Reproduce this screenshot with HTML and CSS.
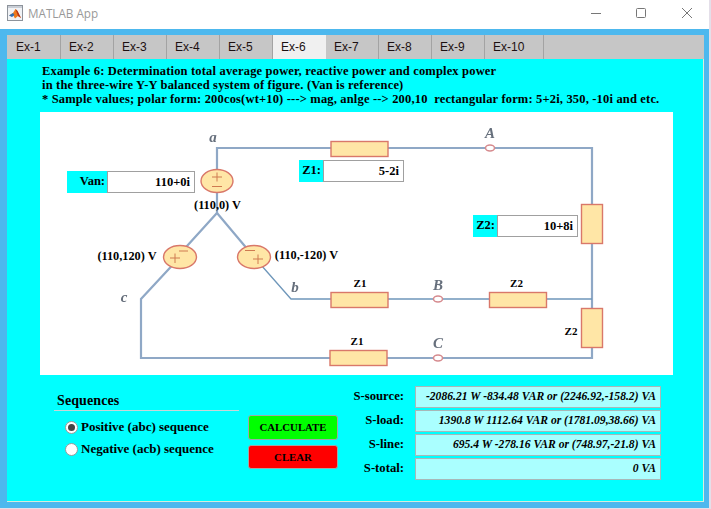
FILE: index.html
```html
<!DOCTYPE html>
<html lang="en">

<head>
    <meta charset="UTF-8">
    <title>MATLAB App</title>
    <link rel="stylesheet" href="styles.css">
</head>

<body>
    <div class="window">
        <header class="titlebar">
            <svg class="app-icon" width="16" height="16" viewBox="0 0 16 16">
                <rect x="0.5" y="0.5" width="15" height="15" fill="#f1f3f6" stroke="#8d939b" />
                <rect x="1" y="1" width="14" height="2" fill="#c9ced6" />
                <path d="M2 10.500 L6 8 L8.500 4 L10.500 6 L14 13 L11 11 L8 13.500 L6 10 Z" fill="#ee7a1c" />
                <path d="M2 10.500 L6 8 L7.500 10 L5 12 Z" fill="#2f6fb5" />
                <path d="M8.500 4 L10.500 6 L14 13 L11 11 Z" fill="#b9321a" />
            </svg>
            <span class="app-title">MATLAB App</span>
            <div class="controls">
                <svg class="control-min" width="10" height="10" viewBox="0 0 10 10">
                    <path d="M0 5.500 H10" stroke="#777" fill="none" />
                </svg>
                <svg width="10" height="10" viewBox="0 0 10 10">
                    <rect x="0.500" y="0.500" width="9" height="9" rx="1" stroke="#777" fill="none" />
                </svg>
                <svg width="10" height="10" viewBox="0 0 10 10">
                    <path d="M0 0 L10 10 M10 0 L0 10" stroke="#777" fill="none" />
                </svg>
            </div>
        </header>

        <div class="frame">
            <nav class="tabs">
                <div class="tab first">Ex-1</div>
                <div class="tab">Ex-2</div>
                <div class="tab">Ex-3</div>
                <div class="tab">Ex-4</div>
                <div class="tab">Ex-5</div>
                <div class="tab active">Ex-6</div>
                <div class="tab">Ex-7</div>
                <div class="tab">Ex-8</div>
                <div class="tab">Ex-9</div>
                <div class="tab wide">Ex-10</div>
            </nav>

            <main class="panel">
                <p class="intro">Example 6: Determination total average power, reactive power and complex power<br>
                    in the three-wire Y-Y balanced system of figure. (Van is reference)<br>
                    * Sample values; polar form: 200cos(wt+10) ---&gt; mag, anlge --&gt; 200,10&nbsp; rectangular form: 5+2i, 350, -10i and etc.</p>

                <div class="figure">
                    <svg class="circuit" width="633" height="263" viewBox="40 112 633 263">
                        <g class="wires">
                            <path d="M177 257 L217 213 L254 257" />
                            <path d="M217 214 V148 H592 V358 H141 V299 L180 257" />
                            <path class="thin" d="M254 257 L291 299 H592" />
                        </g>
                        <g class="parts">
                            <ellipse cx="217" cy="181" rx="16" ry="11.500" />
                            <ellipse cx="180" cy="257" rx="16.500" ry="11.500" />
                            <ellipse cx="254" cy="257" rx="16.500" ry="11.500" />
                            <rect x="331" y="141.500" width="57" height="15" />
                            <rect x="331" y="292.500" width="57" height="15" />
                            <rect x="489.500" y="292.500" width="57" height="15" />
                            <rect x="330" y="350.500" width="57" height="15" />
                            <rect x="581.500" y="204.500" width="21" height="39" />
                            <rect x="581.500" y="308.500" width="21" height="39" />
                        </g>
                        <g class="nodes">
                            <ellipse cx="490" cy="148" rx="4.500" ry="3" />
                            <ellipse cx="438" cy="299" rx="4.500" ry="3" />
                            <ellipse cx="438" cy="358" rx="4.500" ry="3" />
                        </g>
                        <g class="signs">
                            <path d="M212 177 H222 M217 172.500 V181.500 M212 186.500 H222" />
                            <path d="M170 258 H180 M175 253.500 V263 M179 251 H188" />
                            <path d="M245 250.500 H255 M253 259 H263 M258 254.500 V264" />
                        </g>
                        <g class="node-names">
                            <text x="213" y="142" text-anchor="middle">a</text>
                            <text x="490" y="138" text-anchor="middle">A</text>
                            <text x="295" y="292" text-anchor="middle">b</text>
                            <text x="124" y="302" text-anchor="middle">c</text>
                            <text x="438" y="290" text-anchor="middle">B</text>
                            <text x="438" y="348" text-anchor="middle">C</text>
                        </g>
                        <g class="part-names">
                            <text x="360" y="287" text-anchor="middle">Z1</text>
                            <text x="516.500" y="287" text-anchor="middle">Z2</text>
                            <text x="357" y="345" text-anchor="middle">Z1</text>
                            <text x="571" y="335" text-anchor="middle">Z2</text>
                        </g>
                        <g class="volt-names">
                            <text x="217.500" y="209" text-anchor="middle">(110,0) V</text>
                            <text x="127" y="260" text-anchor="middle">(110,120) V</text>
                            <text x="306.500" y="259" text-anchor="middle">(110,-120) V</text>
                        </g>
                    </svg>

                    <div class="field field-van">
                        <label class="field-label">Van:</label>
                        <div class="field-input">110+0i</div>
                    </div>
                    <div class="field field-z1">
                        <label class="field-label">Z1:</label>
                        <div class="field-input">5-2i</div>
                    </div>
                    <div class="field field-z2">
                        <label class="field-label">Z2:</label>
                        <div class="field-input">10+8i</div>
                    </div>
                </div>

                <div class="bottom">
                    <section class="sequences">
                        <h2>Sequences</h2>
                        <div class="radio-row"><span class="radio checked"></span>Positive (abc) sequence</div>
                        <div class="radio-row"><span class="radio"></span>Negative (acb) sequence</div>
                    </section>

                    <div class="buttons">
                        <button class="btn btn-calc">CALCULATE</button>
                        <button class="btn btn-clear">CLEAR</button>
                    </div>

                    <section class="results">
                        <div class="result-row">
                            <span class="result-label">S-source:</span>
                            <span class="result-value">-2086.21 W -834.48 VAR or (2246.92,-158.2) VA</span>
                        </div>
                        <div class="result-row">
                            <span class="result-label">S-load:</span>
                            <span class="result-value">1390.8 W 1112.64 VAR or (1781.09,38.66) VA</span>
                        </div>
                        <div class="result-row">
                            <span class="result-label">S-line:</span>
                            <span class="result-value">695.4 W -278.16 VAR or (748.97,-21.8) VA</span>
                        </div>
                        <div class="result-row">
                            <span class="result-label">S-total:</span>
                            <span class="result-value">0 VA</span>
                        </div>
                    </section>
                </div>
            </main>
        </div>
    </div>
</body>

</html>
```

FILE: styles.css
```css
html,
body {
    margin: 0;
    background: #e4dfe9;
    overflow: hidden;
}

.window {
    width: 709px;
    height: 508px;
    display: flex;
    flex-direction: column;
    font-family: "Liberation Serif", serif;
    color: #000;
}

.titlebar {
    height: 29px;
    flex: none;
    display: flex;
    align-items: center;
    padding: 0 17px 3px 7px;
    box-sizing: border-box;
    background: #fff;
}

.app-icon {
    margin-right: 5px;
}

.app-title {
    font-family: "Open Sans", sans-serif;
    font-size: 11.700px;
    color: #999;
}

.controls {
    margin-left: auto;
    display: flex;
    gap: 36px;
}

.control-min {
    margin-right: -1px;
}

.frame {
    flex: 1;
    background: #4db8ee;
    padding: 6px 5px 6px 7px;
    display: flex;
    flex-direction: column;
}

.tabs {
    height: 24px;
    flex: none;
    display: flex;
    background: #c6c6c6;
    font-family: "Liberation Sans", sans-serif;
    font-size: 12px;
}

.tab {
    width: 53px;
    box-sizing: border-box;
    padding-left: 8px;
    line-height: 24px;
    border-right: 1px solid #a3a3a3;
    color: #1c1010;
}

.tab.first {
    width: 54px;
    padding-left: 9px;
}

.tab.wide {
    width: 59px;
}

.tab.active {
    background: #f0f0f0;
    border-right: 0;
}

.panel {
    flex: 1;
    background: #0ff;
    border-bottom: 1px solid #d6ecdc;
    border-right: 1px solid #d6ecdc;
    display: flex;
    flex-direction: column;
}

.intro {
    margin: 5px 0 6px 35px;
    font-size: 12.500px;
    letter-spacing: 0.17px;
    font-weight: bold;
    line-height: 14px;
    white-space: nowrap;
}

.figure {
    position: relative;
    width: 633px;
    height: 263px;
    margin-left: 33px;
    background: #fff;
    flex: none;
}

.circuit {
    display: block;
}

.wires,
.parts,
.nodes,
.signs,
.node-names {
    filter: blur(0.35px);
}

.wires path {
    fill: none;
    stroke: #8fa8c6;
    stroke-width: 2.2;
}

.wires path.thin {
    stroke: #6f97ba;
    stroke-width: 1.3;
}

.parts ellipse,
.parts rect {
    fill: #ffe6a6;
    stroke: #d9786a;
    stroke-width: 1.4;
}

.nodes ellipse {
    fill: #fff;
    stroke: #d68a8e;
    stroke-width: 1.5;
}

.signs path {
    fill: none;
    stroke: #cf7a50;
    stroke-width: 1;
}

.node-names text {
    font-size: 15px;
    font-style: italic;
    font-weight: bold;
    fill: #666f7c;
}

.part-names text {
    font-size: 11px;
    font-weight: bold;
    fill: #000;
}

.volt-names text {
    font-size: 12.300px;
    font-weight: bold;
    fill: #000;
}

.field {
    position: absolute;
    height: 22px;
    display: flex;
    font-size: 12.500px;
    font-weight: bold;
}

.field-van {
    left: 27px;
    top: 59px;
}

.field-z1 {
    left: 259px;
    top: 48px;
}

.field-z2 {
    left: 433px;
    top: 103px;
}

.field-label {
    width: 24px;
    box-sizing: border-box;
    background: #0ff;
    text-align: right;
    padding-right: 2px;
    line-height: 21px;
}

.field-van .field-label {
    width: 40px;
}

.field-input {
    width: 81px;
    box-sizing: border-box;
    background: #fff;
    border: 1px solid #a0a0a0;
    text-align: right;
    padding-right: 4px;
    line-height: 20px;
}

.field-van .field-input {
    width: 88px;
}

.bottom {
    flex: 1;
    display: flex;
}

.sequences {
    width: 185px;
    margin: 18px 0 0 47px;
    font-size: 13px;
    font-weight: bold;
}

.sequences h2 {
    margin: 0 0 5px;
    padding: 0 0 1px 3px;
    font-size: 14px;
    letter-spacing: 0.1px;
    line-height: 16px;
    border-bottom: 1px solid #c9d6d8;
}

.radio-row {
    height: 22px;
    display: flex;
    align-items: center;
    padding-left: 11px;
    white-space: nowrap;
}

.radio {
    width: 13px;
    height: 13px;
    box-sizing: border-box;
    margin-right: 3px;
    background: #fff;
    border: 1px solid #9a9a9a;
    border-radius: 50%;
    display: flex;
    align-items: center;
    justify-content: center;
}

.radio.checked::after {
    content: "";
    width: 7px;
    height: 7px;
    border-radius: 50%;
    background: #444;
}

.buttons {
    width: 90px;
    margin: 40px 0 0 9px;
    display: flex;
    flex-direction: column;
    gap: 5px;
}

.btn {
    width: 90px;
    height: 24.500px;
    padding: 0;
    border: 1px solid #9ea8a8;
    border-radius: 3px;
    font-family: inherit;
    font-size: 10.800px;
    font-weight: bold;
    color: #000;
}

.btn-calc {
    background: #0f0;
}

.btn-clear {
    background: #f00;
}

.results {
    margin: 11px 0 0 10px;
    display: flex;
    flex-direction: column;
    gap: 2px;
}

.result-row {
    display: flex;
    height: 22px;
    gap: 11px;
    font-size: 12.700px;
    font-weight: bold;
}

.result-label {
    width: 56px;
    text-align: right;
    line-height: 20px;
}

.result-value {
    width: 246px;
    box-sizing: border-box;
    background: #aff;
    border: 1px solid #a8b8b8;
    text-align: right;
    padding-right: 4px;
    font-size: 11.600px;
    line-height: 20px;
    font-style: italic;
    white-space: nowrap;
}
```
